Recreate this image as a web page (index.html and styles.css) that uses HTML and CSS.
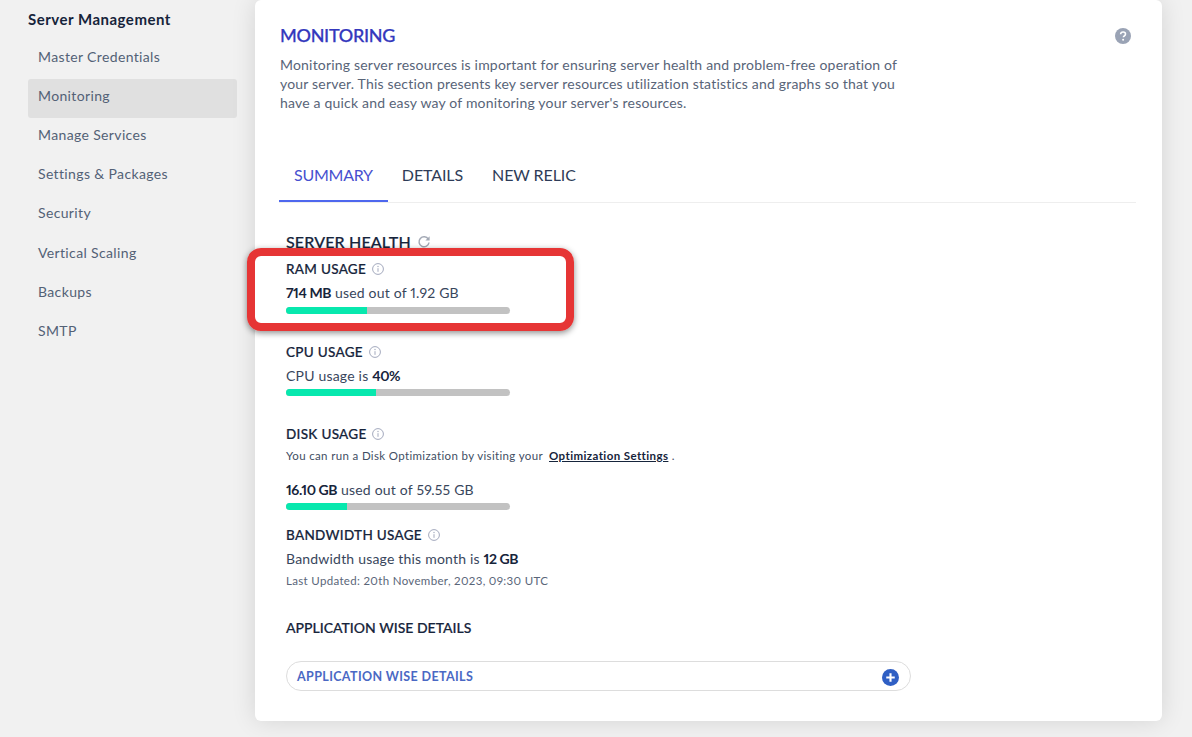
FILE: index.html
```html
<!DOCTYPE html>
<html lang="en">

<head>
    <meta charset="UTF-8">
    <title>Monitoring</title>
    <link rel="stylesheet" href="styles.css">
</head>

<body>
    <div class="container">
        <div class="sidebar">
            <div class="sidebar-title">Server Management</div>
            <a class="sidebar-item">Master Credentials</a>
            <a class="sidebar-item active">Monitoring</a>
            <a class="sidebar-item">Manage Services</a>
            <a class="sidebar-item">Settings &amp; Packages</a>
            <a class="sidebar-item">Security</a>
            <a class="sidebar-item">Vertical Scaling</a>
            <a class="sidebar-item">Backups</a>
            <a class="sidebar-item">SMTP</a>
        </div>

        <div class="card">
            <div class="card-head">
                <div>
                    <h1 class="page-title">MONITORING</h1>
                    <p class="page-desc">Monitoring server resources is important for ensuring server health and problem-free operation of your server. This section presents key server resources utilization statistics and graphs so that you have a quick and easy way of monitoring your server's resources.</p>
                </div>
                <svg class="help-icon" viewBox="0 0 16 16">
                    <circle cx="8" cy="8" r="8" fill="#9aa3b5"/>
                    <path d="M5.6 6.2C5.7 4.8 6.7 4 8.1 4c1.4 0 2.4.8 2.4 2 0 1-.6 1.5-1.3 2-.6.4-.8.7-.8 1.3" fill="none" stroke="#fff" stroke-width="1.6"/>
                    <circle cx="8.1" cy="11.8" r="1" fill="#fff"/>
                </svg>
            </div>

            <div class="tabs">
                <div class="tab active">SUMMARY</div>
                <div class="tab">DETAILS</div>
                <div class="tab">NEW RELIC</div>
            </div>

            <div class="health">
                <h2 class="section-title">SERVER HEALTH
                    <svg class="refresh-icon" viewBox="0 0 14 14">
                        <path d="M11.3 4.2A5 5 0 1 0 12 7.5" fill="none" stroke="#a3a9b5" stroke-width="1.5"/>
                        <path d="M12.6 1.2v4.2H8.4z" fill="#a3a9b5"/>
                    </svg>
                </h2>

                <div class="metric metric-ram">
                    <div class="metric-name">RAM USAGE <svg class="info-icon" viewBox="0 0 12 12"><use href="#info"/></svg></div>
                    <div class="metric-text"><b>714 MB</b> used out of 1.92 GB</div>
                    <div class="bar"><div class="bar-fill" style="width: 36%"></div></div>
                </div>

                <div class="metric metric-cpu">
                    <div class="metric-name">CPU USAGE <svg class="info-icon" viewBox="0 0 12 12"><use href="#info"/></svg></div>
                    <div class="metric-text">CPU usage is <b>40%</b></div>
                    <div class="bar"><div class="bar-fill" style="width: 40%"></div></div>
                </div>

                <div class="metric metric-disk">
                    <div class="metric-name">DISK USAGE <svg class="info-icon" viewBox="0 0 12 12"><use href="#info"/></svg></div>
                    <div class="metric-note">You can run a Disk Optimization by visiting your <a class="note-link">Optimization Settings</a> .</div>
                    <div class="metric-text"><b>16.10 GB</b> used out of 59.55 GB</div>
                    <div class="bar"><div class="bar-fill" style="width: 27.3%"></div></div>
                </div>

                <div class="metric metric-band">
                    <div class="metric-name">BANDWIDTH USAGE <svg class="info-icon" viewBox="0 0 12 12"><use href="#info"/></svg></div>
                    <div class="metric-text">Bandwidth usage this month is <b>12 GB</b></div>
                    <div class="metric-updated">Last Updated: 20th November, 2023, 09:30 UTC</div>
                </div>

                <h2 class="section-title app-title">APPLICATION WISE DETAILS</h2>
                <div class="accordion">
                    <span>APPLICATION WISE DETAILS</span>
                    <svg class="plus-icon" viewBox="0 0 16 16">
                        <circle cx="8" cy="8" r="8" fill="#2f5fc4"/>
                        <path d="M8 4v8M4 8h8" stroke="#fff" stroke-width="2"/>
                    </svg>
                </div>
            </div>
        </div>
    </div>

    <div class="highlight"></div>

    <svg class="defs" width="0" height="0">
        <symbol id="info" viewBox="0 0 12 12">
            <circle cx="6" cy="6" r="5.4" fill="none" stroke="#a3a9bd" stroke-width="1"/>
            <path d="M6 5.2v3.6" stroke="#a3a9bd" stroke-width="1"/>
            <circle cx="6" cy="3.5" r=".7" fill="#a3a9bd"/>
        </symbol>
    </svg>
</body>

</html>
```

FILE: styles.css
```css
html,
body {
    height: 100%;
    overflow: hidden;
}

body {
    margin: 0;
    background-color: #f1f1f1;
    font-family: "Lato", "Liberation Sans", sans-serif;
    font-variant-numeric: proportional-nums;
    color: #16243b;
}

.container {
    display: flex;
    align-items: flex-start;
    padding-left: 28px;
}

.defs {
    position: absolute;
}

/* sidebar */
.sidebar {
    width: 209px;
    flex-shrink: 0;
    margin-right: 18px;
}

.sidebar-title {
    height: 39.6px;
    padding-top: 11px;
    box-sizing: border-box;
    font-size: 15px;
    font-weight: 700;
    line-height: 17px;
    letter-spacing: .5px;
    color: #16243b;
}

.sidebar-item {
    display: block;
    height: 39.2px;
    padding-left: 10px;
    font-size: 14px;
    line-height: 34px;
    letter-spacing: .36px;
    color: #536176;
    border-radius: 3px;
}

.sidebar-item.active {
    background-color: #e0e0e0;
}

/* card */
.card {
    width: 907px;
    height: 721px;
    box-sizing: border-box;
    padding: 25px 26px 0 24px;
    background-color: #fff;
    border-radius: 6px;
    box-shadow: 0 0 24px rgba(0, 0, 0, .12);
}

.card-head {
    display: flex;
    justify-content: space-between;
    align-items: flex-start;
}

.page-title {
    margin: 0;
    padding-left: 1px;
    font-size: 18px;
    font-weight: 500;
    line-height: 20px;
    letter-spacing: -.3px;
    color: #3438bd;
    -webkit-text-stroke: .25px #3438bd;
}

.page-desc {
    width: 630px;
    margin: 10px 0 0;
    padding-left: 1px;
    font-size: 14px;
    line-height: 19px;
    letter-spacing: .19px;
    color: #586478;
}

.help-icon {
    width: 16px;
    height: 16px;
    margin: 3px 5px 0 0;
}

.tabs {
    display: flex;
    margin-top: 48px;
    height: 42px;
    border-bottom: 1px solid #eee;
}

.tab {
    padding: 0 15px;
    height: 42px;
    box-sizing: border-box;
    font-size: 16px;
    line-height: 30px;
    letter-spacing: -.1px;
    color: #2e3c58;
    margin-right: -1px;
}

.tab.active {
    letter-spacing: -.25px;
    color: #4750cf;
    border-bottom: 2px solid #4e67ee;
}

/* health section */
.health {
    padding-left: 7px;
}

.section-title {
    margin: 29px 0 0;
    font-size: 16px;
    font-weight: 500;
    line-height: 20px;
    letter-spacing: .15px;
    color: #16243b;
    -webkit-text-stroke: .2px #16243b;
}

.refresh-icon {
    width: 14px;
    height: 14px;
    margin-left: 2px;
    vertical-align: -1px;
}

.metric-name {
    font-size: 13.5px;
    font-weight: 500;
    line-height: 18px;
    letter-spacing: .3px;
    color: #16243b;
    -webkit-text-stroke: .2px #16243b;
}

.info-icon {
    width: 12px;
    height: 12px;
    margin-left: 2px;
    vertical-align: -1px;
}

.metric-text {
    font-size: 14px;
    line-height: 18px;
    margin-top: 6px;
    letter-spacing: .2px;
    color: #38465c;
}

.metric-text b {
    letter-spacing: -.4px;
    color: #16243b;
}

.metric-note {
    margin-top: 5px;
    font-size: 11.5px;
    line-height: 16px;
    letter-spacing: .35px;
    color: #414e63;
}

.note-link {
    margin-left: 3px;
    font-weight: 700;
    letter-spacing: .4px;
    color: #16243b;
    text-decoration: underline;
}

.metric-updated {
    margin-top: 5px;
    font-size: 11.5px;
    line-height: 16px;
    letter-spacing: .33px;
    color: #5a6679;
}

.bar {
    width: 224px;
    height: 7px;
    margin-top: 5px;
    background-color: #c2c2c2;
    border-radius: 4px;
    overflow: hidden;
}

.bar-fill {
    height: 100%;
    background-color: #07e8ae;
}

.metric-ram {
    margin-top: 8px;
}

.metric-cpu {
    margin-top: 29px;
}

.metric-cpu .bar {
    margin-top: 4px;
}

.metric-disk {
    margin-top: 29px;
}

.metric-disk .metric-text {
    margin-top: 17px;
}

.metric-disk .bar {
    margin-top: 4px;
}

.metric-band {
    margin-top: 16px;
}

.app-title {
    margin-top: 29px;
    font-size: 14px;
    letter-spacing: 0;
}

.accordion {
    display: flex;
    justify-content: space-between;
    align-items: center;
    width: 625px;
    height: 30px;
    box-sizing: border-box;
    margin-top: 23px;
    padding: 0 10px;
    border: 1px solid #ddd;
    border-radius: 15px;
    font-size: 12.5px;
    font-weight: 700;
    letter-spacing: .37px;
    color: #4a68c4;
}

.plus-icon {
    width: 17px;
    height: 17px;
    margin: 2px 1px 0 0;
}

/* red annotation over the ram block */
.highlight {
    position: absolute;
    left: 247px;
    top: 248px;
    width: 327px;
    height: 83px;
    box-sizing: border-box;
    border: 8px solid #e63535;
    border-radius: 14px;
    box-shadow: 0 2px 6px rgba(0, 0, 0, .45);
}
```
